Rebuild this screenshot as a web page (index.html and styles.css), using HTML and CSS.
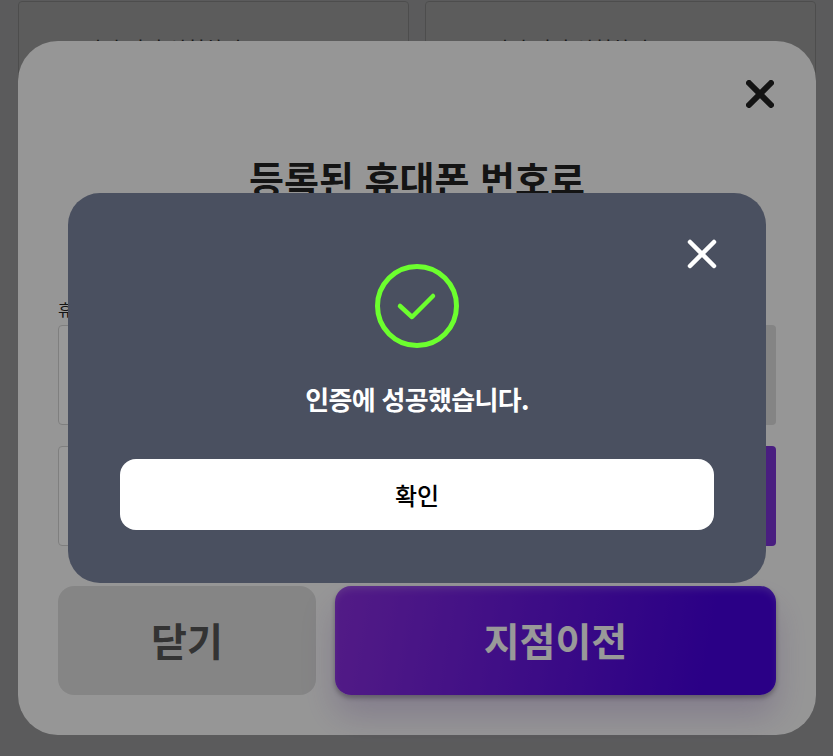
FILE: index.html
```html
<!DOCTYPE html>
<html lang="ko">
<head>
  <meta charset="UTF-8">
  <meta name="viewport" content="width=device-width, initial-scale=1.0">
  <title>지점이전</title>
  <link rel="stylesheet" href="styles.css">
</head>
<body>
  <div class="branch-grid">
    <div class="branch-card"><p>지점 이전 신청하기</p></div>
    <div class="branch-card"><p>지점 이전 신청하기</p></div>
  </div>

  <div class="layer">
    <div class="modal">
      <button class="modal-close">
        <svg width="28" height="28" viewBox="0 0 28 28"><path d="M3 3L25 25M25 3L3 25" fill="none" stroke="#222" stroke-width="6" stroke-linecap="round"/></svg>
      </button>
      <h1>등록된 휴대폰 번호로</h1>
      <label class="field-label">휴대폰 번호</label>
      <div class="field-row">
        <div class="field"></div>
        <div class="field-btn field-btn-gray"></div>
      </div>
      <div class="field-row">
        <div class="field"></div>
        <div class="field-btn field-btn-purple"></div>
      </div>
      <div class="modal-actions">
        <button class="btn-close">닫기</button>
        <button class="btn-move">지점이전</button>
      </div>
    </div>
  </div>

  <div class="layer">
    <div class="alert">
      <button class="alert-close">
        <svg width="30" height="30" viewBox="0 0 30 30"><path d="M3 3L27 27M27 3L3 27" fill="none" stroke="#fff" stroke-width="4.5" stroke-linecap="round"/></svg>
      </button>
      <svg class="alert-icon" width="84" height="84" viewBox="0 0 84 84">
        <circle cx="42" cy="42" r="39.5" fill="none" stroke="#6cff2e" stroke-width="5"/>
        <path d="M25 42L37 53L58 32" fill="none" stroke="#6cff2e" stroke-width="4.5" stroke-linecap="round" stroke-linejoin="round"/>
      </svg>
      <p class="alert-text">인증에 성공했습니다.</p>
      <button class="alert-btn">확인</button>
    </div>
  </div>
</body>
</html>
```

FILE: styles.css
```css
* {
  box-sizing: border-box;
}

html, body {
  height: 100%;
}

body {
  margin: 0;
  background-color: #fbfcff;
  font-family: "Noto Sans CJK KR", "Noto Sans", sans-serif;
  overflow: hidden;
}

button {
  font-family: inherit;
  border: none;
  padding: 0;
  background: none;
  cursor: pointer;
}

.branch-grid {
  display: grid;
  grid-template-columns: 1fr 1fr;
  gap: 16px;
  padding: 1px 17px 0 18px;
}

.branch-card {
  height: 200px;
  padding-left: 64px;
  border: 1px solid #d6d6d6;
  border-radius: 4px;
  background-color: #fff;
}

.branch-card p {
  margin: 33px 0 0;
  font-size: 20px;
  line-height: 28px;
  color: #444;
}

.layer {
  position: fixed;
  inset: 0;
  background-color: rgba(0, 0, 0, 0.4);
}

.modal {
  position: relative;
  width: 798px;
  height: 694px;
  margin: 41px 0 0 18px;
  padding: 114px 40px 0;
  border-radius: 40px;
  background-color: #fbfbfb;
}

.modal-close {
  position: absolute;
  top: 39px;
  right: 42px;
  display: flex;
}

.modal h1 {
  margin: 0;
  height: 142px;
  font-size: 38px;
  line-height: 46px;
  font-weight: 700;
  text-align: center;
  color: #222;
}

.field-label {
  display: block;
  height: 28px;
  font-size: 16px;
  line-height: 24px;
  color: #222;
}

.field-row {
  display: flex;
  gap: 16px;
  margin-bottom: 21px;
}

.field {
  flex: 1;
  height: 100px;
  border: 1px solid #d4d4d4;
  border-radius: 4px;
  background-color: #fff;
}

.field-btn {
  width: 180px;
  height: 100px;
  border-radius: 4px;
}

.field-btn-gray {
  background-color: #dcdcdc;
}

.field-btn-purple {
  background-color: #7a32d6;
}

.modal-actions {
  display: flex;
  gap: 19px;
  margin-top: 40px;
}

.btn-close {
  width: 258px;
  height: 109px;
  padding-bottom: 4px;
  border-radius: 16px;
  background-color: #dedede;
  font-size: 39px;
  font-weight: 700;
  color: #555;
}

.btn-move {
  flex: 1;
  height: 109px;
  padding-bottom: 4px;
  border-radius: 16px;
  background: linear-gradient(100deg, #8a2ee0, #4600e0 85%);
  box-shadow: 0 20px 34px rgba(100, 50, 170, 0.22), 0 3px 5px rgba(0, 0, 0, 0.3), inset 0 5px 8px -3px rgba(255, 255, 255, 0.25);
  font-size: 39px;
  font-weight: 700;
  color: #fff;
}

.alert {
  position: relative;
  display: flex;
  flex-direction: column;
  align-items: center;
  width: 698px;
  height: 390px;
  margin: 193px 0 0 68px;
  padding: 71px 52px 0;
  border-radius: 32px;
  background-color: #4a5060;
}

.alert-close {
  position: absolute;
  top: 46px;
  right: 49px;
  display: flex;
}

.alert-text {
  margin: 33px 0 0;
  font-size: 26px;
  line-height: 36px;
  font-weight: 700;
  letter-spacing: -0.7px;
  color: #fff;
}

.alert-btn {
  width: 100%;
  height: 71px;
  margin-top: 42px;
  border-radius: 16px;
  background-color: #fff;
  font-size: 24px;
  font-weight: 500;
  color: #000;
}
```
